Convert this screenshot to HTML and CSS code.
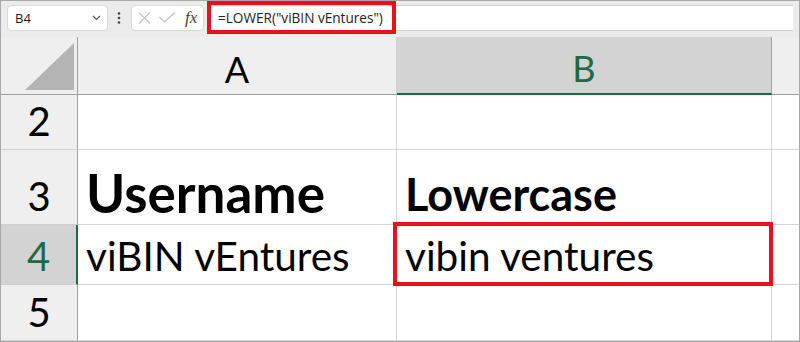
FILE: index.html
```html
<!DOCTYPE html>
<html lang="en">
<head>
    <meta charset="UTF-8">
    <meta name="viewport" content="width=device-width, initial-scale=1.0">
    <title>LOWER function</title>
    <link rel="stylesheet" href="styles.css">
</head>
<body>
    <div class="app">
        <!-- name box + formula bar -->
        <div class="toolbar">
            <div class="namebox">
                <span>B4</span>
                <svg class="chevron" width="9" height="6" viewBox="0 0 9 6">
                    <path d="M1 1 L4.5 4.5 L8 1" fill="none" stroke="#555" stroke-width="1.2"/>
                </svg>
            </div>
            <svg class="dots" width="4" height="12" viewBox="0 0 4 12">
                <circle cx="2" cy="1.5" r="1.3" fill="#444"/>
                <circle cx="2" cy="6" r="1.3" fill="#444"/>
                <circle cx="2" cy="10.5" r="1.3" fill="#444"/>
            </svg>
            <div class="fxbox">
                <svg width="13" height="12" viewBox="0 0 13 12">
                    <path d="M1 0.5 L12 11.5 M12 0.5 L1 11.5" stroke="#c2c2c2" stroke-width="1.2"/>
                </svg>
                <svg width="17" height="11" viewBox="0 0 17 11">
                    <path d="M0.5 5 L5.5 10 L16 0.5" fill="none" stroke="#c2c2c2" stroke-width="1.2"/>
                </svg>
                <span class="fx">fx</span>
            </div>
            <div class="formula">
                <span class="hl">=LOWER("viBIN vEntures")</span>
            </div>
        </div>

        <!-- worksheet -->
        <div class="sheet">
            <div class="corner"><span class="tri"></span></div>
            <div class="colhead">A</div>
            <div class="colhead sel">B</div>
            <div class="colhead last"></div>

            <div class="rowhead">2</div>
            <div class="cell"></div>
            <div class="cell"></div>
            <div class="cell last"></div>

            <div class="rowhead">3</div>
            <div class="cell bold">Username</div>
            <div class="cell bold small">Lowercase</div>
            <div class="cell last"></div>

            <div class="rowhead sel">4</div>
            <div class="cell">viBIN vEntures</div>
            <div class="cell active">vibin ventures</div>
            <div class="cell last"></div>

            <div class="rowhead">5</div>
            <div class="cell"></div>
            <div class="cell"></div>
            <div class="cell last"></div>
        </div>
    </div>
</body>
</html>
```

FILE: styles.css
```css
* {
    box-sizing: border-box;
}
body {
    margin: 0;
    background: #fff;
}
.app {
    width: 800px;
    height: 342px;
    border: 1px solid #a9a9a9;
    overflow: hidden;
}
.toolbar {
    height: 36px;
    background: #ebebeb;
    display: flex;
    align-items: center;
    padding: 0 6px 3px 6px;
    font-family: "Open Sans", sans-serif;
    color: #222;
}
.namebox {
    width: 101px;
    height: 26px;
    background: #fff;
    border: 1px solid #dadada;
    border-radius: 4px;
    display: flex;
    align-items: center;
    justify-content: space-between;
    padding: 0 6px 0 7px;
    font-size: 13px;
}
.dots {
    margin: 0 10px 0 9px;
}
.fxbox {
    width: 73px;
    height: 26px;
    background: #fff;
    border: 1px solid #dadada;
    border-radius: 4px;
    display: flex;
    align-items: center;
    gap: 8px;
    padding-left: 6px;
}
.fx {
    font-family: "Liberation Serif", serif;
    font-style: italic;
    font-size: 17px;
    color: #444;
    margin-left: 1px;
}
.formula {
    flex: 1;
    height: 26px;
    margin-left: 3px;
    background: #fff;
    border-top: 1px solid #d2d2d2;
    border-bottom: 1px solid #d2d2d2;
    display: flex;
    align-items: center;
}
.hl {
    height: 33px;
    padding: 0 9px 0 7px;
    border: 4px solid #e8101a;
    display: flex;
    align-items: center;
    font-size: 13.6px;
    white-space: nowrap;
}

.sheet {
    display: grid;
    grid-template-columns: 77px 319px 375px 1fr;
    grid-template-rows: 58px 55px 75px 60px 56px;
    font-family: "Lato", sans-serif;
    color: #000;
}
.corner {
    background: #efefef;
    border-right: 1px solid #a0a0a0;
    border-bottom: 1px solid #a0a0a0;
    position: relative;
}
.tri {
    position: absolute;
    left: 24px;
    top: 6px;
    width: 49px;
    height: 47px;
    background: #b4b4b4;
    clip-path: polygon(100% 0, 100% 100%, 0 100%);
}
.colhead {
    background: #efefef;
    border-right: 1px solid #d0d0d0;
    border-bottom: 1px solid #a0a0a0;
    display: flex;
    justify-content: center;
    align-items: center;
    padding-top: 6px;
    font-size: 36px;
}
.colhead.sel {
    background: #d3d3d3;
    color: #1e6b41;
    border-right-color: #a0a0a0;
    border-bottom: 2px solid #1e6b41;
}
.colhead.last {
    border-right: none;
}
.rowhead {
    background: #efefef;
    border-right: 1px solid #a0a0a0;
    border-bottom: 1px solid #d0d0d0;
    display: flex;
    justify-content: center;
    align-items: flex-end;
    padding-bottom: 8px;
    font-size: 40px;
    line-height: 1;
}
.rowhead.sel {
    background: #d3d3d3;
    color: #1e6b41;
    border-right: 2px solid #1e6b41;
}
.cell {
    border-right: 1px solid #d4d4d4;
    border-bottom: 1px solid #d4d4d4;
    display: flex;
    align-items: flex-end;
    padding: 0 0 8px 8px;
    font-size: 40.5px;
    line-height: 1;
    white-space: nowrap;
}
.cell.bold {
    font-weight: bold;
    font-size: 53px;
    padding-bottom: 5px;
}
.cell.bold.small {
    font-size: 45px;
    padding-bottom: 7px;
}
.cell.last {
    border-right: none;
}
.active {
    position: relative;
}
.active::after {
    content: "";
    position: absolute;
    left: -4px;
    top: -3px;
    right: -2px;
    bottom: -2px;
    border: 4px solid #e8101a;
}
```
